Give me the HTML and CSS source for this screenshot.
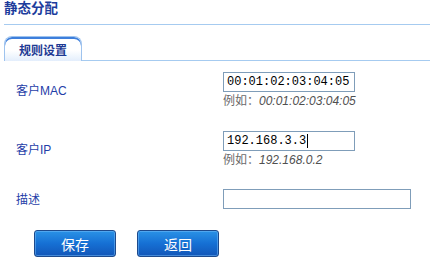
FILE: index.html
```html
<!DOCTYPE html>
<html>
<head>
<meta charset="utf-8">
<link rel="stylesheet" href="styles.css">
</head>
<body>
<div class="page">
  <h1 class="title">静态分配</h1>
  <div class="tabbar">
    <div class="tab">规则设置</div>
  </div>
  <div class="form">
    <div class="row row-hint">
      <div class="label">客户MAC</div>
      <div class="field">
        <input class="input" type="text" value="00:01:02:03:04:05">
        <div class="hint">例如：<i>00:01:02:03:04:05</i></div>
      </div>
    </div>
    <div class="row row-hint">
      <div class="label">客户IP</div>
      <div class="field">
        <div class="input input-fake">192.168.3.3<span class="caret"></span></div>
        <div class="hint">例如：<i>192.168.0.2</i></div>
      </div>
    </div>
    <div class="row">
      <div class="label">描述</div>
      <div class="field">
        <input class="input input-wide" type="text" value="">
      </div>
    </div>
    <div class="actions">
      <button class="btn">保存</button>
      <button class="btn">返回</button>
    </div>
  </div>
</div>
</body>
</html>
```
FILE: styles.css
```css
* { box-sizing: border-box; }
html, body { margin: 0; padding: 0; background: #fff; }
body {
  font-family: "Liberation Sans", "Noto Sans CJK SC", sans-serif;
  font-size: 12px;
  width: 430px;
  height: 267px;
  overflow: hidden;
}
.page { padding-left: 4px; }
.title {
  margin: 0;
  height: 25px;
  padding-top: 1px;
  font-size: 13.5px;
  font-weight: bold;
  color: #1c3c9c;
  line-height: 16px;
  border-bottom: 1px solid #a6cbf0;
}
.tabbar {
  margin-top: 11px;
  height: 25px;
  border-bottom: 1px solid #a6cbf0;
  display: flex;
  align-items: flex-end;
}
.tab {
  width: 78px;
  height: 25px;
  margin-bottom: -1px;
  border: 1px solid #9ec3ee;
  border-bottom: none;
  border-radius: 8px 8px 0 0;
  background: linear-gradient(#ffffff, #ffffff 55%, #e3eefc);
  box-shadow: inset 0 2px 0 #3e7fdc;
  color: #1e3a94;
  font-weight: bold;
  font-size: 12px;
  line-height: 14px;
  padding-top: 7px;
  text-align: center;
}
.form { padding-top: 11px; }
.row {
  display: flex;
  align-items: center;
  height: 19px;
}
.row-hint {
  height: 35px;
  margin-bottom: 24px;
}
.row-hint + .row-hint { margin-bottom: 23px; }
.label {
  width: 219px;
  padding-left: 12px;
  color: #1f40a8;
  font-size: 12px;
}
.row-hint .label { margin-top: -1px; }
.row:not(.row-hint) .label { padding-top: 0; }
.field { display: flex; flex-direction: column; }
.input {
  width: 132px;
  height: 20px;
  border: 1px solid #7f9db9;
  padding: 0 3px;
  margin: 0;
  font-family: "Liberation Mono", "DejaVu Sans Mono", monospace;
  font-size: 12px;
  color: #000;
  background: #fff;
  outline: none;
}
.input-fake {
  display: flex;
  align-items: center;
  line-height: 14px;
}
.caret {
  display: inline-block;
  width: 1px;
  height: 14px;
  background: #000;
  margin-left: 1px;
}
.input-wide { width: 188px; }
.hint {
  margin-top: 2px;
  color: #6a6a6a;
  font-size: 12px;
  line-height: 14px;
}
.hint i { font-style: italic; color: #505050; }
.actions {
  display: flex;
  gap: 21px;
  margin-top: 22px;
  padding-left: 30px;
}
.btn {
  width: 82px;
  height: 27px;
  border: 1px solid #1d4a8c;
  border-radius: 3px;
  background: linear-gradient(#2a92e6, #1670d4 50%, #1256b8);
  box-shadow: inset 0 0 0 1px rgba(120, 190, 250, 0.5);
  color: #fff;
  font-family: "Liberation Sans", "Noto Sans CJK SC", sans-serif;
  font-size: 14px;
  padding: 0;
}
```
